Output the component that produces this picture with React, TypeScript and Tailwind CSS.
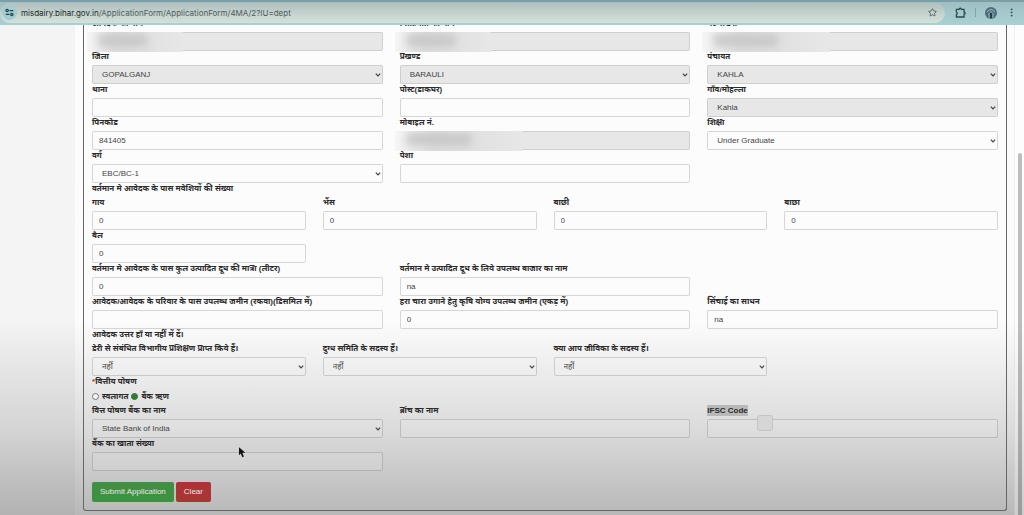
import type { ReactNode } from "react";
import { Star, EllipsisVertical } from "lucide-react";

/* ------------------------------ Shared styles ------------------------------ */
const control =
  "block h-[19px] w-full appearance-none rounded-[2px] border text-[8px] leading-[17px] text-[#444] outline-none";
const enabledControl = "border-[#00000026] bg-white/10";
const disabledControl = "border-[#0000001a] bg-[#e7e7e7]";
const label =
  "block h-[14px] text-[8px] leading-[11px] font-bold whitespace-nowrap text-[#2b2b2b]";

type FieldProps = {
  id: string;
  text: string;
  value?: string;
  disabled?: boolean;
  selected?: boolean;
  children?: ReactNode;
};

function Label({ id, text, selected }: FieldProps) {
  return (
    <label htmlFor={id} className={label}>
      {selected ? <span className="inline-block bg-[#b9b9b9]">{text}</span> : text}
    </label>
  );
}

function TextField(props: FieldProps) {
  return (
    <div className="relative min-w-0">
      <Label {...props} />
      <input
        id={props.id}
        type="text"
        defaultValue={props.value}
        disabled={props.disabled}
        className={`${control} px-[6px] ${props.disabled ? disabledControl : enabledControl}`}
      />
      {props.children}
    </div>
  );
}

function SelectField(props: FieldProps) {
  return (
    <div className="min-w-0">
      <Label {...props} />
      <div className="relative">
        <select
          id={props.id}
          disabled={props.disabled}
          className={`${control} px-[9px] opacity-100 ${props.disabled ? disabledControl : enabledControl}`}
        >
          <option>{props.value}</option>
        </select>
        <svg
          viewBox="0 0 6 4"
          className="pointer-events-none absolute top-[8px] right-[2px] h-[4px] w-[6px]"
          fill="none"
          stroke="#444"
          strokeWidth="1.2"
        >
          <path d="M0.8 0.7 3 3 5.2 0.7" />
        </svg>
      </div>
    </div>
  );
}

/* Hides personal details inside a read-only field */
function Smudge({ wide }: { wide?: boolean }) {
  return (
    <div
      className={`pointer-events-none absolute top-[14px] -left-[5px] h-[20px] overflow-hidden bg-linear-to-r from-[#f6f6f6] via-[#dcdcdc] via-30% to-[#e7e7e7] ${wide ? "w-32" : "w-24"}`}
    >
      <div className="mt-[3px] ml-[12px] h-[11px] w-1/2 bg-[#c6c6c6] blur-[4px]" />
    </div>
  );
}

function Row({ children }: { children: ReactNode }) {
  return <div className="grid grid-cols-3 gap-x-[17px]">{children}</div>;
}

function QuarterRow({ children }: { children: ReactNode }) {
  return <div className="grid grid-cols-4 gap-x-[17px]">{children}</div>;
}

/* ------------------------------- Browser bar ------------------------------- */
function BrowserBar() {
  return (
    <header className="relative z-10 flex h-[25px] shrink-0 items-center border-t-2 border-[#7c9fa5] bg-linear-to-b from-[#9fc0c3] to-[#aad0d4] pb-[2px]">
      <div className="flex h-[20px] flex-1 items-center rounded-full bg-linear-to-b from-[#b3c0bf] to-[#d2e3da] pr-[8px] pl-[2px]">
        <button
          aria-label="Site information"
          className="mr-[4px] flex size-[15px] items-center justify-center rounded-full bg-[#a3cbd0]"
        >
          <svg viewBox="0 0 10 10" className="size-[9px]" fill="none" stroke="#24474d" strokeWidth="1.4">
            <circle cx="2.4" cy="2.8" r="1.3" />
            <path d="M5 2.8h4.2M0.8 7.2H5" />
            <circle cx="7.6" cy="7.2" r="1.3" />
          </svg>
        </button>
        <p className="flex-1 font-['Inter','Liberation_Sans',sans-serif] text-[8px] leading-[14px] text-[#4f5c5c]">
          <span className="text-[#1d2828]">misdairy.bihar.gov.in</span>
          /ApplicationForm/ApplicationForm/4MA/2?IU=dept
        </p>
        <button aria-label="Bookmark">
          <Star size={9} color="#3c4b4d" />
        </button>
      </div>
      <div className="flex items-center pr-[7px] pl-[10px]">
        <button aria-label="Extensions">
          <svg viewBox="0 0 12 12" className="size-[11px]" fill="none" stroke="#2a4a50" strokeWidth="1.4">
            <path d="M1.5 2.5h3a1.2 1.2 0 0 1 2.4 0h3v3a1.2 1.2 0 0 1 0 2.4v3H1.5V8.2a1.4 1.4 0 0 0 0-2.7z" />
          </svg>
        </button>
        <span className="mx-[9px] h-[9px] w-px bg-[#7ba5aa]" />
        <button aria-label="Profile">
          <svg viewBox="0 0 12 12" className="size-[12px]">
            <circle cx="6" cy="6" r="6" fill="#4d6d78" />
            <path d="M2 5q4-5 8 0M4 11V5.5M8 11V5.5M6 8V4" stroke="#9cb7bf" fill="none" />
            <path d="M5 6h2v5H5z" fill="#243f4b" />
          </svg>
        </button>
        <button aria-label="Menu" className="ml-[9px]">
          <EllipsisVertical size={11} color="#2a4a50" />
        </button>
      </div>
    </header>
  );
}

/* ----------------------------------- App ----------------------------------- */
export default function App() {
  return (
    <div className="flex min-h-screen flex-col overflow-hidden bg-linear-to-b from-[#fcfcfc] from-62% via-[#dcdcdc] via-83% to-[#b8b8b8] font-['Liberation_Sans','Noto_Sans',sans-serif]">
      <BrowserBar />
      <div className="-mt-[7px] flex flex-1">
        <aside className="w-[75px] shrink-0 bg-black/3" />
        <main className="min-w-0 flex-1 pr-[7px] pb-[4px] pl-[8px]">
          <form
            className="rounded-b-[3px] border border-t-0 border-[#666] px-[8px] pb-[8px]"
            onSubmit={(e) => e.preventDefault()}
          >
            <Row>
              <TextField id="name" text="आवेदक का नाम" disabled>
                <Smudge />
              </TextField>
              <TextField id="father" text="पिता/पति का नाम" disabled>
                <Smudge />
              </TextField>
              <TextField id="aadhaar" text="पं० संख्या" disabled>
                <Smudge wide />
              </TextField>
            </Row>
            <Row>
              <SelectField id="district" text="जिला" value="GOPALGANJ" disabled />
              <SelectField id="block" text="प्रखण्ड" value="BARAULI" disabled />
              <SelectField id="panchayat" text="पंचायत" value="KAHLA" disabled />
            </Row>
            <Row>
              <TextField id="thana" text="थाना" />
              <TextField id="post" text="पोस्ट(डाकघर)" />
              <SelectField id="village" text="गाँव/मोहल्ला" value="Kahla" disabled />
            </Row>
            <Row>
              <TextField id="pincode" text="पिनकोड" value="841405" />
              <TextField id="mobile" text="मोबाइल नं." disabled>
                <Smudge wide />
              </TextField>
              <SelectField id="education" text="शिक्षा" value="Under Graduate" />
            </Row>
            <Row>
              <SelectField id="category" text="वर्ग" value="EBC/BC-1" />
              <TextField id="occupation" text="पेशा" />
            </Row>

            <h2 className={label}>वर्तमान मे आवेदक के पास मवेशियों की संख्या</h2>
            <QuarterRow>
              <TextField id="cow" text="गाय" value="0" />
              <TextField id="buffalo" text="भैंस" value="0" />
              <TextField id="heifer" text="बाछी" value="0" />
              <TextField id="calf" text="बाछा" value="0" />
              <TextField id="ox" text="बैल" value="0" />
            </QuarterRow>
            <Row>
              <TextField id="milk" text="वर्तमान मे आवेदक के पास कुल उत्पादित दूध की मात्रा (लीटर)" value="0" />
              <TextField id="market" text="वर्तमान मे उत्पादित दूध के लिये उपलब्ध बाजार का नाम" value="na" />
            </Row>
            <Row>
              <TextField id="land" text="आवेदक/आवेदक के परिवार के पास उपलब्ध जमीन (रकवा)(डिसमिल में)" />
              <TextField id="fodder" text="हरा चारा उगाने हेतु कृषि योग्य उपलब्ध जमीन (एकड़ में)" value="0" />
              <TextField id="irrigation" text="सिंचाई का साधन" value="na" />
            </Row>

            <h2 className={label}>आवेदक उत्तर हाँ या नहीं में दें।</h2>
            <QuarterRow>
              <SelectField id="training" text="डेरी से संबंधित विभागीय प्रशिक्षण प्राप्त किये हैं।" value="नहीं" />
              <SelectField id="committee" text="दुग्ध समिति के सदस्य हैं।" value="नहीं" />
              <SelectField id="jeevika" text="क्या आप जीविका के सदस्य हैं।" value="नहीं" />
            </QuarterRow>

            <fieldset>
              <legend className={label}>
                <span className="text-[#b03030]">*</span>वित्तीय पोषण
              </legend>
              <div className="flex h-[15px] items-center gap-[3px] pb-[2px] text-[8px] leading-[11px] font-bold text-[#2b2b2b]">
                <input
                  id="self"
                  type="radio"
                  name="finance"
                  className="size-[7px] appearance-none rounded-full border border-[#777] bg-white/60 checked:border-[#2f7a35] checked:bg-[#2f7a35]"
                />
                <label htmlFor="self">स्वलागत</label>
                <input
                  id="loan"
                  type="radio"
                  name="finance"
                  defaultChecked
                  className="size-[7px] appearance-none rounded-full border border-[#777] checked:border-[#2f7a35] checked:bg-[#2f7a35]"
                />
                <label htmlFor="loan">बैंक ऋण</label>
              </div>
            </fieldset>
            <Row>
              <SelectField id="bank" text="वित्त पोषण बैंक का नाम" value="State Bank of India" />
              <TextField id="branch" text="ब्रांच का नाम" />
              <TextField id="ifsc" text="IFSC Code" selected>
                <span className="absolute top-[10px] left-[50px] size-[16px] rounded-[3px] border border-[#c4c4c4] bg-[#d6d6d6]" />
              </TextField>
            </Row>
            <Row>
              <div className="relative">
                <TextField id="account" text="बैंक का खाता संख्या" />
                <svg
                  viewBox="0 0 8 12"
                  className="pointer-events-none absolute top-[9px] left-[147px] h-[11px] w-[7px]"
                  fill="#111"
                >
                  <path d="M0 0v9l2-2 1.8 4.4 1.8-.8L3.8 6.4h3.4z" />
                </svg>
              </div>
            </Row>

            <div className="mt-[11px] flex gap-[2px] text-[8px] leading-[12px] text-[#e6e6e6]">
              <button type="submit" className="h-[20px] rounded-[2px] bg-[#3f9142] px-[8px]">
                Submit Application
              </button>
              <button type="reset" className="h-[20px] rounded-[2px] bg-[#ab3535] px-[8px]">
                Clear
              </button>
            </div>
          </form>
        </main>
        <div className="flex w-[10px] shrink-0 flex-col items-center border-l border-black/5 bg-white/30 pt-[135px]">
          <div className="w-[4px] flex-1 rounded-t-full bg-black/25" />
        </div>
      </div>
    </div>
  );
}
